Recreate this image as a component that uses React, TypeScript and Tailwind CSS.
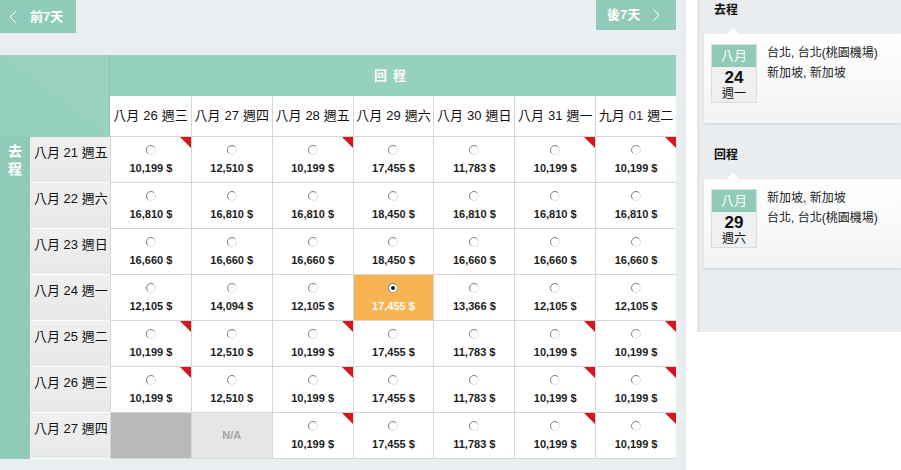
import React from "react";

const font = "font-['Liberation_Sans','Noto_Sans_CJK_TC',sans-serif]";

const cols = [
  { m: "八月", d: "26", w: "週三" },
  { m: "八月", d: "27", w: "週四" },
  { m: "八月", d: "28", w: "週五" },
  { m: "八月", d: "29", w: "週六" },
  { m: "八月", d: "30", w: "週日" },
  { m: "八月", d: "31", w: "週一" },
  { m: "九月", d: "01", w: "週二" },
];

// "x" = blocked cell, "na" = no fare
const rows: { label: string; fares: string[] }[] = [
  { label: "八月 21 週五", fares: ["10,199", "12,510", "10,199", "17,455", "11,783", "10,199", "10,199"] },
  { label: "八月 22 週六", fares: ["16,810", "16,810", "16,810", "18,450", "16,810", "16,810", "16,810"] },
  { label: "八月 23 週日", fares: ["16,660", "16,660", "16,660", "18,450", "16,660", "16,660", "16,660"] },
  { label: "八月 24 週一", fares: ["12,105", "14,094", "12,105", "17,455", "13,366", "12,105", "12,105"] },
  { label: "八月 25 週二", fares: ["10,199", "12,510", "10,199", "17,455", "11,783", "10,199", "10,199"] },
  { label: "八月 26 週三", fares: ["10,199", "12,510", "10,199", "17,455", "11,783", "10,199", "10,199"] },
  { label: "八月 27 週四", fares: ["x", "na", "10,199", "17,455", "11,783", "10,199", "10,199"] },
];

const selected = { row: 3, col: 3 };

const Radio = ({ checked }: { checked?: boolean }) => (
  <svg width="12" height="12" viewBox="0 0 12 12">
    <circle cx="6" cy="6" r="4.5" fill={checked ? "#fff" : "none"} stroke={checked ? "#9a9a9a" : "#e0e0e0"} strokeWidth="1" />
    <path d="M2.8 9.2 A4.5 4.5 0 0 1 9.2 2.8" fill="none" stroke="#858585" strokeWidth="1" />
    {checked && <circle cx="6" cy="6" r="2" fill="#111" />}
  </svg>
);

const Chevron = ({ dir }: { dir: "l" | "r" }) => (
  <svg width="8" height="14" viewBox="0 0 8 14">
    <path d={dir === "l" ? "M7 1 L1 7 L7 13" : "M1 1 L7 7 L1 13"} fill="none" stroke="#fff" strokeWidth="1" />
  </svg>
);

const FareCell = ({ fare, active }: { fare: string; active: boolean }) => {
  if (fare === "x") return <div className="bg-[#b9b9b9] border-l border-b border-[#d6d6d6]" />;
  if (fare === "na")
    return (
      <div className="bg-[#e6e6e6] border-l border-b border-[#d6d6d6] flex items-center justify-center text-[11px] font-bold text-[#a3a3a3]">
        N/A
      </div>
    );
  return (
    <div
      className={`relative border-l border-b border-[#d6d6d6] flex flex-col items-center pt-[7px] ${
        active ? "bg-[#f8b453]" : "bg-white"
      }`}
    >
      {fare === "10,199" && (
        <span className="absolute top-0 right-0 w-0 h-0 border-t-[11px] border-l-[11px] border-t-[#d5161c] border-l-transparent" />
      )}
      <Radio checked={active} />
      <span className={`mt-[7px] text-[11px] font-bold leading-none ${active ? "text-white" : "text-[#1d1d1d]"}`}>
        {fare} $
      </span>
    </div>
  );
};

const TripCard = ({
  title,
  day,
  week,
  lines,
  gap,
}: {
  title: string;
  day: string;
  week: string;
  lines: string[];
  gap: string;
}) => (
  <div className={gap}>
    <div className="pl-[14px] text-[12px] font-bold text-[#111] leading-[18px]">{title}</div>
    <div className="relative ml-[4px] mt-[15px] h-[89px] bg-[linear-gradient(#ffffff,#f1f3f5)] shadow-[0_1px_2px_rgba(0,0,0,0.12)] pt-[10px] pl-[7px] flex">
      <span className="absolute -top-[6px] left-[23px] w-0 h-0 border-b-[6px] border-x-[6px] border-b-white border-x-transparent" />
      <div className="w-[46px] h-[59px] bg-[#eef0f2] border border-[#d9dde0] flex flex-col items-center">
        <div className="w-full h-[22px] bg-[#8fcbb8] text-white text-[13px] flex items-center justify-center">八月</div>
        <div className="text-[17px] font-bold leading-[19px] text-[#111] mt-[1px]">{day}</div>
        <div className="text-[12px] leading-[14px] text-[#111]">{week}</div>
      </div>
      <div className="ml-[10px] text-[12px] leading-[20px] text-[#222] -mt-[1px]">
        {lines.map((l) => (
          <div key={l}>{l}</div>
        ))}
      </div>
    </div>
  </div>
);

export default function App() {
  return (
    <div className={`w-[901px] h-[470px] flex bg-white overflow-hidden ${font}`}>
      {/* left: fare matrix */}
      <div className="w-[686px] h-full bg-[#e9eef1] pr-[10px]">
        <div className="h-[55px] flex justify-between items-start">
          <button className="w-[76px] h-[33px] bg-[#8fcbb8] flex items-center pl-[9px] gap-[13px] text-white text-[13px] font-bold">
            <Chevron dir="l" />
            前7天
          </button>
          <button className="w-[80px] h-[30px] bg-[#8fcbb8] flex items-center pl-[11px] gap-[12px] text-white text-[13px] font-bold">
            後7天
            <Chevron dir="r" />
          </button>
        </div>

        <div className="grid grid-cols-[110px_repeat(7,1fr)] grid-rows-[41px_41px_repeat(7,46px)]">
          <div className="row-span-2 bg-[linear-gradient(to_top_right,#95cfbe_50%,#98d1c0_50%)] border-r border-[#8fc7b5]" />
          <div className="col-span-7 bg-[#96d0bf] flex items-center justify-center text-white text-[13px] font-bold tracking-[6px]">
            回程
          </div>
          {cols.map((c, i) => (
            <div
              key={c.d}
              className={`bg-white flex items-center justify-center text-[13px] text-[#111] gap-[4px] border-b border-[#d6d6d6] ${
                i > 0 ? "border-l" : ""
              }`}
            >
              <span>{c.m}</span>
              <span className={c.d === "01" ? "text-[#3b2352]" : ""}>{c.d}</span>
              <span>{c.w}</span>
            </div>
          ))}

          {rows.map((r, ri) => (
            <React.Fragment key={r.label}>
              <div className="flex">
                {ri === 0 ? (
                  <div className="w-[30px] bg-[#8fcbb8] text-white text-[14px] font-bold flex flex-col items-center pt-[5px] leading-[18px]">
                    <span>去</span>
                    <span>程</span>
                  </div>
                ) : (
                  <div className="w-[30px] bg-[#8fcbb8]" />
                )}
                <div className="flex-1 ml-px bg-[linear-gradient(#f0f0f0,#e8e8e8)] border-b border-white text-[13px] text-[#111] pl-[3px] pt-[6px]">
                  {r.label}
                </div>
              </div>
              {r.fares.map((f, ci) => (
                <FareCell key={ci} fare={f} active={ri === selected.row && ci === selected.col} />
              ))}
            </React.Fragment>
          ))}
        </div>
      </div>

      <div className="w-[11px] bg-white" />

      {/* right: itinerary summary */}
      <div className="flex-1 h-[332px] bg-[#e9edf0] border-l-[3px] border-[#e2e7eb] pt-[1px]">
        <TripCard title="去程" day="24" week="週一" lines={["台北, 台北(桃園機場)", "新加坡, 新加坡"]} gap="" />
        <TripCard title="回程" day="29" week="週六" lines={["新加坡, 新加坡", "台北, 台北(桃園機場)"]} gap="mt-[23px]" />
      </div>
    </div>
  );
}
